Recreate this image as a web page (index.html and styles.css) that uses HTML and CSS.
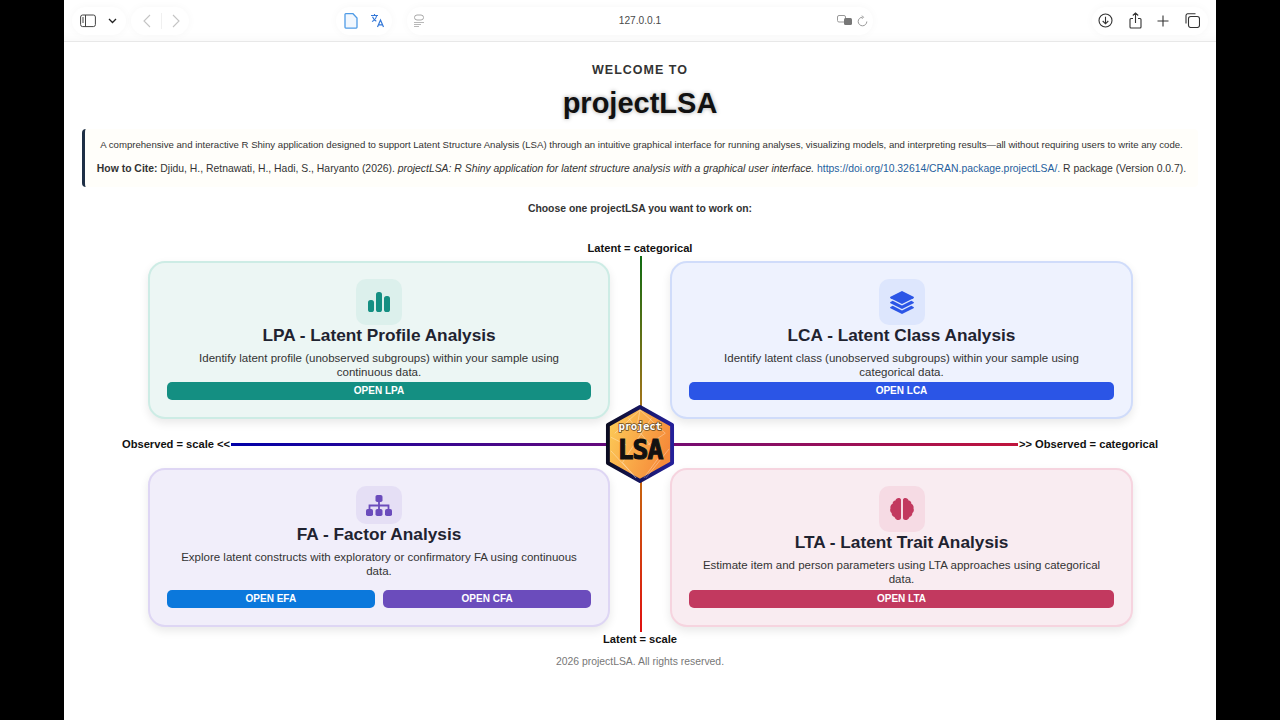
FILE: index.html
```html
<!DOCTYPE html>
<html lang="en">
<head>
<meta charset="utf-8">
<title>projectLSA</title>
<link rel="stylesheet" href="styles.css">
</head>
<body>
<div class="window">
  <header class="toolbar">
    <div class="tb-group">
      <div class="pill pill-side">
        <svg class="ic" width="16" height="14" viewBox="0 0 16 14"><rect x="0.6" y="1" width="14.8" height="11.6" rx="2" fill="none" stroke="#444" stroke-width="1"/><path d="M5.5 1v11.6M2 4h2M2 6h2M2 8h2" stroke="#444" stroke-width="1" fill="none"/></svg>
        <svg class="ic" width="9" height="6" viewBox="0 0 9 6"><path d="M1 1l3.5 3.5L8 1" fill="none" stroke="#222" stroke-width="1.3"/></svg>
      </div>
      <div class="pill pill-nav">
        <svg width="8" height="14" viewBox="0 0 8 14"><path d="M7 1L1 7l6 6" fill="none" stroke="#c4c4c4" stroke-width="1.1"/></svg>
        <span class="nav-sep"></span>
        <svg width="8" height="14" viewBox="0 0 8 14"><path d="M1 1l6 6-6 6" fill="none" stroke="#c4c4c4" stroke-width="1.1"/></svg>
      </div>
    </div>
    <div class="tb-center">
      <div class="pill pill-page">
        <svg width="14" height="16" viewBox="0 0 14 16"><path d="M1 1.5a.8.8 0 0 1 .8-.8H9l4 4.3v9.3a.8.8 0 0 1-.8.8H1.800a.8.8 0 0 1-.8-.8z" fill="#f1f7fe" stroke="#4f9be6" stroke-width="1.3"/></svg>
        <svg width="15" height="15" viewBox="0 0 15 15"><path d="M1 2.500h7M4.500 1v1.500M2 8.500c2.500-1 4-3 4.700-6M2.500 3.800c.8 2 2 3.500 3.800 4.500" fill="none" stroke="#3478d8" stroke-width="1.100"/><path d="M7.500 14l3-7 3 7M8.600 11.800h3.900" fill="none" stroke="#3478d8" stroke-width="1.200"/></svg>
      </div>
      <div class="pill address">
        <svg class="addr-ic" width="12" height="13" viewBox="0 0 12 13"><rect x="1.500" y="1" width="9" height="5" rx="2.500" fill="none" stroke="#a8a8a8"/><path d="M1 8.500h10M1 10.500h7M1 12.500h5" stroke="#b8b8b8" fill="none"/></svg>
        <span class="addr-text">127.0.0.1</span>
        <span class="addr-right">
          <svg width="16" height="11" viewBox="0 0 16 11"><rect x="0.500" y="0.500" width="8" height="6.500" rx="1.500" fill="none" stroke="#999"/><rect x="7" y="3" width="8" height="7" rx="1.500" fill="#777"/></svg>
          <svg width="11" height="12" viewBox="0 0 11 12"><path d="M5.500 2.200A4.300 4.300 0 1 0 9.800 6.500M5 .600l1.500 1.600L5 3.800" fill="none" stroke="#999"/></svg>
        </span>
      </div>
    </div>
    <div class="pill pill-actions">
      <svg width="15" height="15" viewBox="0 0 15 15"><circle cx="7.500" cy="7.500" r="6.500" fill="none" stroke="#333" stroke-width="1.100"/><path d="M7.500 3.800v7M4.700 8l2.800 2.800L10.300 8" fill="none" stroke="#333" stroke-width="1.100"/></svg>
      <svg width="13" height="17" viewBox="0 0 13 17"><path d="M4 6.500H2a1 1 0 0 0-1 1V15a1 1 0 0 0 1 1h9a1 1 0 0 0 1-1V7.500a1 1 0 0 0-1-1H9M6.500 11V1M3.800 3.500L6.500 .9l2.700 2.600" fill="none" stroke="#333" stroke-width="1.100"/></svg>
      <svg width="12" height="12" viewBox="0 0 12 12"><path d="M6 .5v11M.5 6h11" stroke="#333" stroke-width="1.100"/></svg>
      <svg width="15" height="15" viewBox="0 0 15 15"><rect x="3.500" y="3.500" width="11" height="11" rx="2.200" fill="#fff" stroke="#333" stroke-width="1.100"/><path d="M1 10.500V2.500A1.800 1.800 0 0 1 2.500 .8h8" fill="none" stroke="#333" stroke-width="1.100"/></svg>
    </div>
  </header>

  <main class="page">
    <p class="welcome">WELCOME TO</p>
    <h1 class="brand">projectLSA</h1>
    <section class="intro">
      <p class="intro-lead">A comprehensive and interactive R Shiny application designed to support Latent Structure Analysis (LSA) through an intuitive graphical interface for running analyses, visualizing models, and interpreting results—all without requiring users to write any code.</p>
      <p class="intro-cite"><strong>How to Cite:</strong> Djidu, H., Retnawati, H., Hadi, S., Haryanto (2026). <em>projectLSA: R Shiny application for latent structure analysis with a graphical user interface.</em> <a href="#">https://doi.org/10.32614/CRAN.package.projectLSA/.</a> R package (Version 0.0.7).</p>
    </section>
    <p class="choose">Choose one projectLSA you want to work on:</p>

    <section class="diagram">
      <div class="axis-v"></div>
      <div class="axis-h"></div>
      <span class="axis-label label-top">Latent = categorical</span>
      <span class="axis-label label-bottom">Latent = scale</span>
      <span class="axis-label label-left">Observed = scale &lt;&lt;</span>
      <span class="axis-label label-right">&gt;&gt; Observed = categorical</span>

      <div class="quad">
        <article class="card card-lpa">
          <div class="icon-box">
            <svg width="22" height="20" viewBox="0 0 22 20"><rect x="0" y="8" width="6" height="12" rx="2.600"/><rect x="8" y="0" width="6" height="20" rx="2.600"/><rect x="16" y="4" width="6" height="16" rx="2.600"/></svg>
          </div>
          <h2>LPA - Latent Profile Analysis</h2>
          <p>Identify latent profile (unobserved subgroups) within your sample using continuous data.</p>
          <div class="btns"><a class="btn" href="#">OPEN LPA</a></div>
        </article>

        <article class="card card-lca">
          <div class="icon-box">
            <svg width="24" height="23" viewBox="0 0 24 23"><path d="M12 0l11.500 5.800a.8.8 0 0 1 0 1.400L12 13 .5 7.200a.8.800 0 0 1 0-1.400z"/><path d="M2.700 9.800L12 14.500l9.300-4.700 2.200 1.100a.8.8 0 0 1 0 1.400L12 18 .5 12.300a.8.800 0 0 1 0-1.400z"/><path d="M2.700 14.800L12 19.500l9.300-4.700 2.200 1.100a.8.8 0 0 1 0 1.400L12 23 .5 17.300a.8.800 0 0 1 0-1.400z"/></svg>
          </div>
          <h2>LCA - Latent Class Analysis</h2>
          <p>Identify latent class (unobserved subgroups) within your sample using categorical data.</p>
          <div class="btns"><a class="btn" href="#">OPEN LCA</a></div>
        </article>

        <article class="card card-fa">
          <div class="icon-box">
            <svg width="26" height="21" viewBox="0 0 26 21"><rect x="9.500" y="0" width="7" height="7" rx="1.800"/><rect x="0" y="14" width="7" height="7" rx="1.800"/><rect x="9.500" y="14" width="7" height="7" rx="1.800"/><rect x="19" y="14" width="7" height="7" rx="1.800"/><path d="M13 7v7M3.500 14v-3.500h19V14" fill="none" stroke="currentColor" stroke-width="1.800"/></svg>
          </div>
          <h2>FA - Factor Analysis</h2>
          <p>Explore latent constructs with exploratory or confirmatory FA using continuous data.</p>
          <div class="btns"><a class="btn btn-efa" href="#">OPEN EFA</a><a class="btn" href="#">OPEN CFA</a></div>
        </article>

        <article class="card card-lta">
          <div class="icon-box">
            <svg width="24" height="22" viewBox="0 0 24 22"><path d="M11 1.800C11 .6 9.700 0 8.600 0 7 0 5.800 1 5.400 2.400 3.600 2.600 2.500 4 2.700 5.700 1 6.500 0 8.300.5 10.200-.2 11.900.2 13.900 1.700 15c-.2 2 1 3.600 2.800 3.900C5 20.800 6.800 22 8.600 22c1.300 0 2.400-.7 2.400-2z"/><path d="M13 1.800C13 .6 14.300 0 15.400 0c1.600 0 2.800 1 3.200 2.400 1.800.2 2.900 1.600 2.700 3.300 1.700.8 2.700 2.600 2.200 4.500.7 1.700.3 3.700-1.200 4.800.2 2-1 3.600-2.800 3.900-.5 1.900-2.300 3.100-4.100 3.100-1.300 0-2.400-.7-2.400-2z"/></svg>
          </div>
          <h2>LTA - Latent Trait Analysis</h2>
          <p>Estimate item and person parameters using LTA approaches using categorical data.</p>
          <div class="btns"><a class="btn" href="#">OPEN LTA</a></div>
        </article>
      </div>

      <svg class="logo" width="70" height="80" viewBox="0 0 72 82">
        <defs>
          <linearGradient id="hexRim" x1="0" y1="0" x2="1" y2="0"><stop offset="0" stop-color="#0c0c22"/><stop offset="0.45" stop-color="#14145a"/><stop offset="1" stop-color="#24209a"/></linearGradient>
          <linearGradient id="hexFill" x1="0" y1="0" x2="1" y2="0.400"><stop offset="0" stop-color="#fdd05a"/><stop offset="1" stop-color="#f68b3a"/></linearGradient>
        </defs>
        <path d="M36 3L69 21.500v39L36 79 3 60.500V21.500z" fill="url(#hexFill)" stroke="url(#hexRim)" stroke-width="4" stroke-linejoin="round"/>
        <path d="M10 30L36 6l26 24M6 48l26 28M66 46L42 76M24 14l32 40-16 22M48 14L18 60l14 16M36 6l-4 22M62 30L44 42M6 34l16 8" fill="none" stroke="#fff" stroke-opacity=".4" stroke-width=".8"/>
        <text class="logo-top" x="36" y="27" text-anchor="middle">project</text>
        <text class="logo-main" x="36" y="56" text-anchor="middle">LSA</text>
      </svg>
    </section>

    <footer class="foot">2026 projectLSA. All rights reserved.</footer>
  </main>
</div>
</body>
</html>
```

FILE: styles.css
```css
* { box-sizing: border-box; }
html, body { margin: 0; height: 100%; background: #000; overflow: hidden; }
body { font-family: "Liberation Sans", Arial, sans-serif; color: #1f2937; }
.window { width: 1152px; height: 720px; margin: 0 auto; background: #fff; display: flex; flex-direction: column; }

.toolbar { flex: none; height: 42px; padding: 0 8px; display: flex; align-items: center; border-bottom: 1px solid #e8e8e8; background: #fff; box-shadow: inset 0 -10px 14px -12px #f2f2f2; }
.tb-group { display: flex; gap: 5px; width: 264px; flex: none; }
.pill { height: 28px; border-radius: 14px; display: flex; align-items: center; background: #fff; box-shadow: 0 0 8px rgba(0,0,0,.035); }
.pill-side { width: 54px; padding: 0 9px 0 8px; justify-content: space-between; }
.pill-nav { width: 58px; padding: 0 9px 0 12px; justify-content: space-between; }
.nav-sep { width: 1px; height: 16px; background: #f0f0f0; }
.tb-center { display: flex; gap: 15px; }
.pill-page { width: 56px; padding: 0 7px 0 8px; justify-content: space-between; }
.address { width: 466px; padding: 0 5px 0 6px; position: relative; justify-content: space-between; }
.addr-text { font-size: 10.200px; color: #4a4a4a; position: absolute; left: 0; right: 0; text-align: center; }
.addr-right { display: flex; align-items: center; gap: 4px; }
.pill-actions { width: 116px; margin-left: auto; padding: 0 8px 0 6px; justify-content: space-between; }

.page { flex: 1; padding: 0 18px; text-align: center; }
.welcome { margin: 21px 0 0; font-size: 12.500px; line-height: 15px; font-weight: 700; letter-spacing: 1px; color: #333; }
.brand { margin: 9px 0 0; font-size: 29px; line-height: 33px; font-weight: 700; color: #111; text-shadow: 0 0 4px rgba(0,0,0,.35); }
.intro { margin-top: 9px; height: 58px; background: #fffefa; border-left: 3px solid #1e2f45; border-radius: 4px; padding: 8px 8px 0; color: #333; }
.intro p { margin: 0; line-height: 16px; white-space: nowrap; }
.intro-lead { font-size: 9.600px; }
.intro-cite { font-size: 10.400px; margin-top: 8px !important; }
.intro a { color: #1f5f9e; text-decoration: none; }
.choose { margin: 15px 0 0; font-size: 10.400px; line-height: 13px; font-weight: 700; color: #333; }

.diagram { position: relative; width: 1152px; margin: 0 -18px; height: 424px; padding: 46px 83px 0 84px; }
.quad { display: grid; grid-template-columns: 462px 463px; grid-template-rows: 158px 159px; column-gap: 60px; row-gap: 49px; position: relative; }
.card { border: 2px solid; border-radius: 17px; padding: 16px 17px 17px; display: flex; flex-direction: column; align-items: center; box-shadow: 0 4px 10px rgba(0,0,0,.09); }
.card h2 { margin: 0; font-size: 17.250px; line-height: 20px; font-weight: 700; color: #1f2330; }
.card p { margin: 6px 0 0; font-size: 11.500px; line-height: 14.400px; color: #333; max-width: 405px; }
.icon-box { width: 46px; height: 46px; flex: none; border-radius: 10px; display: flex; align-items: center; justify-content: center; }
.btns { margin-top: auto; width: 100%; display: flex; gap: 8.500px; }
.btn { flex: 1; height: 18px; border-radius: 5px; color: #fff; font-size: 10px; line-height: 18px; font-weight: 700; text-decoration: none; text-align: center; }

.card-lpa { background: #ecf6f4; border-color: #cdece5; }
.card-lpa .icon-box { background: #dcf0ec; color: #148f82; }
.card-lpa .btn { background: #148f82; }
.card-lca { background: #eef2fe; border-color: #d0dcfa; }
.card-lca .icon-box { background: #dde6fd; color: #2b55e6; }
.card-lca .btn { background: #2b55e6; }
.card-fa { background: #f1eefa; border-color: #ded6f4; }
.card-fa .icon-box { height: 38px; background: #e5dff5; color: #6b4cbc; }
.card-fa .btn { background: #6b4cbc; }
.card-fa .btn-efa { background: #0b78dc; }
.card-lta { background: #f9ecf1; border-color: #f6d4df; }
.card-lta .icon-box { background: #f6dbe4; color: #c2395f; }
.card-lta .btn { background: #c2395f; }
.icon-box svg { fill: currentColor; }

.axis-v { position: absolute; left: 575.500px; top: 41px; width: 2px; height: 376px; background: linear-gradient(#0f6b12, #a5751a 40%, #c8610f 62%, #e01010); }
.axis-h { position: absolute; left: 167px; width: 787px; top: 228px; height: 3px; background: linear-gradient(90deg, #0000a8, #6a0a7a 50%, #c0143c); }
.axis-label { position: absolute; font-size: 11.150px; line-height: 14px; font-weight: 700; color: #111; white-space: nowrap; }
.label-top { left: 0; right: 0; top: 26px; }
.label-bottom { left: 0; right: 0; top: 417px; }
.label-left { left: 58px; top: 222px; }
.label-right { left: 955px; top: 222px; }
.logo { position: absolute; left: 541px; top: 189px; }
.logo-top { font: 700 11px "DejaVu Sans Mono", monospace; letter-spacing: -.3px; fill: #fff; stroke: #6b4a20; stroke-width: 1.600px; paint-order: stroke; }
.logo-main { font: 700 27px "DejaVu Sans Mono", monospace; letter-spacing: -1px; fill: #111; stroke: #111; stroke-width: 1.200px; }

.foot { margin-top: 16px; font-size: 10.400px; line-height: 14px; color: #777; }
```
